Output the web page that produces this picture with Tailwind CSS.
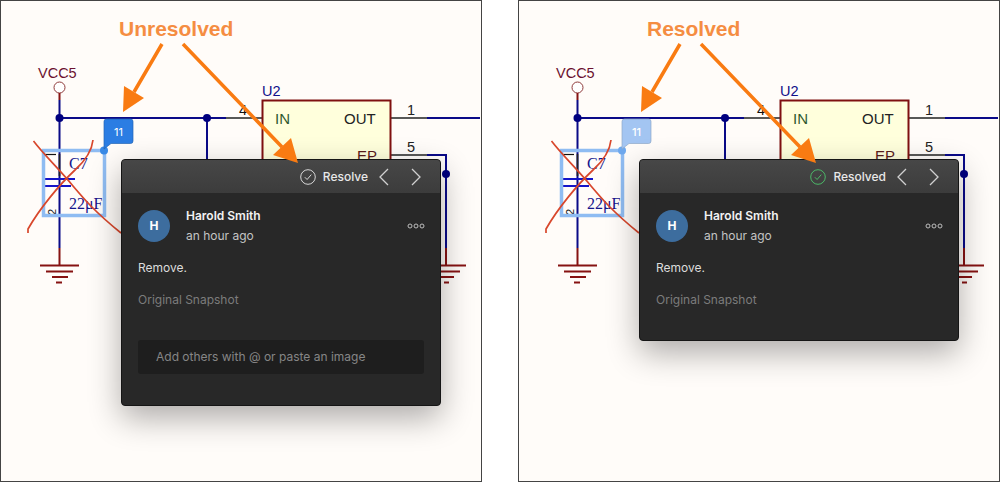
<!DOCTYPE html>
<html lang="en">
  <head>
    <meta charset="UTF-8" />
    <title>Resolved and unresolved comments</title>
    <script src="https://cdn.jsdelivr.net/npm/@tailwindcss/browser@4"></script>
  </head>
  <body class="bg-white font-['Inter',sans-serif]">
    <div class="flex justify-between w-[1000px] h-[482px] overflow-hidden">
      <!-- unresolved -->
      <div class="relative w-[482px] h-[482px] bg-[#fffcf9] ring-1 ring-inset ring-[#444]">
        <svg class="absolute inset-0" width="482" height="482" viewBox="0 0 482 482" fill="none">
          <g font-family="Liberation Sans, sans-serif" font-size="14.500">
            <text x="38" y="78" fill="#6b1030">VCC5</text>
            <text x="262" y="96" fill="#10108a">U2</text>
            <text x="239" y="115" fill="#111">4</text>
            <text x="407" y="115" fill="#222">1</text>
            <text x="407" y="152" fill="#222">5</text>
          </g>
          <circle cx="59.5" cy="87.5" r="5.5" fill="#fff" stroke="#8f3a3a" stroke-width="1" />
          <path d="M59.5 93V100M59.5 248V265M40 265.5H79M46 271.5H73M52 277H68M56 282.5H62" stroke="#861212" stroke-width="2" />
          <path d="M59.5 100V248M59.5 118H226M207 118V165M427 118H480M427 155H446V248" stroke="#0a0a88" stroke-width="2" />
          <path d="M226 118H262M391 118H427M391 155H427M59.5 154V176" stroke="#222" stroke-width="1.6" />
          <path d="M446 248V265M427 265.5H466M433 271.5H460M439 277H454M444 282.5H449" stroke="#861212" stroke-width="2" />
          <circle cx="59.5" cy="118" r="4" fill="#00007f" />
          <circle cx="207" cy="118" r="4" fill="#00007f" />
          <circle cx="446" cy="174" r="4" fill="#00007f" />
          <rect x="262.5" y="100.5" width="128" height="100" fill="#ffffdc" stroke="#7f1010" stroke-width="2" />
          <g font-family="Liberation Sans, sans-serif" font-size="15">
            <text x="275" y="124" fill="#2f5a2f">IN</text>
            <text x="344" y="124" fill="#222">OUT</text>
            <text x="357" y="161" fill="#5a1a1a">EP</text>
          </g>
          <path d="M44 179H75M44 186H71" stroke="#1414c8" stroke-width="1.8" />
          <path d="M45 154.500H56" stroke="#111" stroke-width="1.2" />
          <g font-family="Liberation Serif, serif" font-size="16" fill="#16168c">
            <text x="69" y="169">C7</text>
            <text x="69" y="209">22μF</text>
          </g>
          <text x="0" y="0" transform="translate(56 215) rotate(-90)" font-family="Liberation Sans, sans-serif" font-size="11" fill="#111">2</text>
          <rect x="43.500" y="150.500" width="61" height="65" stroke="#8fbcf2" stroke-width="3.500" />
          <path d="M33.500 141C45 156 60 170 73 186C84 199 95 212 121 233" stroke="#d8472c" stroke-width="1.7" />
          <path d="M93 140C92 150 86 160 75 170C60 184 40 208 28 229V233" stroke="#d8472c" stroke-width="1.7" />
          <circle cx="104" cy="150.500" r="4" fill="#3a8ae6" />
          <path d="M104 149V121.500Q104 119 106.500 119H130.500Q133 119 133 121.500V141Q133 143.500 130.500 143.500H111Z" fill="#2b7de3" stroke="#2465b5" stroke-width="0.7" />
          <text x="118.500" y="136" text-anchor="middle" font-family="Inter, sans-serif" font-size="11" fill="#fff">11</text>
        </svg>
        <div class="absolute left-[121px] top-[159px] w-[320px] h-[247px] flex flex-col rounded-[4px] border border-[#151515] bg-[#282828] shadow-[0_12px_32px_rgba(0,0,0,0.32)] overflow-hidden">
          <div class="h-[33px] flex items-center justify-end pr-[19px] bg-gradient-to-b from-[#474747] to-[#3c3c3c]">
            <svg width="16" height="16" viewBox="0 0 16 16" fill="none" class="mr-[7px]">
              <circle cx="8" cy="8" r="7.300" stroke="#d8d8d8" stroke-width="1" />
              <path d="M4.800 8.200L7.100 10.500L11.300 5.600" stroke="#d8d8d8" stroke-width="1" />
            </svg>
            <span class="text-[12px] font-medium text-[#e8e8e8] mr-[11px]">Resolve</span>
            <svg width="10" height="18" viewBox="0 0 10 18" fill="none" class="mr-[22px]"><path d="M9 1L1 9L9 17" stroke="#d0d0d0" stroke-width="1.300" /></svg>
            <svg width="10" height="18" viewBox="0 0 10 18" fill="none"><path d="M1 1L9 9L1 17" stroke="#d0d0d0" stroke-width="1.300" /></svg>
          </div>
          <div class="flex pl-[16px] pr-[15px] pt-[17px]">
            <div class="w-[32px] h-[32px] rounded-full bg-[#3d6d9e] flex items-center justify-center text-[12px] font-bold text-white">H</div>
            <div class="ml-[16px] flex-1 -mt-[2px]">
              <div class="text-[12px] leading-[16px] font-semibold text-[#f2f2f2]">Harold Smith</div>
              <div class="text-[12px] leading-[16px] mt-[4px] text-[#c4c4c4]">an hour ago</div>
            </div>
            <svg width="18" height="6" viewBox="0 0 18 6" fill="none" class="mt-[13px]">
              <circle cx="3" cy="3" r="2" stroke="#bdbdbd" /><circle cx="9" cy="3" r="2" stroke="#bdbdbd" /><circle cx="15" cy="3" r="2" stroke="#bdbdbd" />
            </svg>
          </div>
          <div class="pl-[16px] mt-[16px] text-[12px] leading-[16px] text-[#dcdcdc]">Remove.</div>
          <div class="pl-[16px] mt-[16px] text-[12px] leading-[16px] text-[#7c7c7c]">Original Snapshot</div>
          <div class="mx-[16px] mt-[32px] h-[34px] rounded-[3px] bg-[#1e1e1e] flex items-center pl-[18px] text-[12px] text-[#868686]">Add others with @ or paste an image</div>
        </div>
        <svg class="absolute inset-0" width="482" height="482" viewBox="0 0 482 482" fill="none">
          <text x="119" y="36" font-family="Liberation Sans, sans-serif" font-size="21" font-weight="700" fill="#f58d42">Unresolved</text>
          <path d="M162 44L134 92M183 44L282 147" stroke="#f97b12" stroke-width="3.500" />
          <path d="M123 112L124 86L144 98Z M298 163L273 155L291 138Z" fill="#f97b12" />
        </svg>
      </div>

      <!-- resolved -->
      <div class="relative w-[482px] h-[482px] bg-[#fffcf9] ring-1 ring-inset ring-[#444]">
        <svg class="absolute inset-0" width="482" height="482" viewBox="0 0 482 482" fill="none">
          <g font-family="Liberation Sans, sans-serif" font-size="14.500">
            <text x="38" y="78" fill="#6b1030">VCC5</text>
            <text x="262" y="96" fill="#10108a">U2</text>
            <text x="239" y="115" fill="#111">4</text>
            <text x="407" y="115" fill="#222">1</text>
            <text x="407" y="152" fill="#222">5</text>
          </g>
          <circle cx="59.5" cy="87.5" r="5.5" fill="#fff" stroke="#8f3a3a" stroke-width="1" />
          <path d="M59.5 93V100M59.5 248V265M40 265.5H79M46 271.5H73M52 277H68M56 282.5H62" stroke="#861212" stroke-width="2" />
          <path d="M59.5 100V248M59.5 118H226M207 118V165M427 118H480M427 155H446V248" stroke="#0a0a88" stroke-width="2" />
          <path d="M226 118H262M391 118H427M391 155H427M59.5 154V176" stroke="#222" stroke-width="1.6" />
          <path d="M446 248V265M427 265.5H466M433 271.5H460M439 277H454M444 282.5H449" stroke="#861212" stroke-width="2" />
          <circle cx="59.5" cy="118" r="4" fill="#00007f" />
          <circle cx="207" cy="118" r="4" fill="#00007f" />
          <circle cx="446" cy="174" r="4" fill="#00007f" />
          <rect x="262.5" y="100.5" width="128" height="100" fill="#ffffdc" stroke="#7f1010" stroke-width="2" />
          <g font-family="Liberation Sans, sans-serif" font-size="15">
            <text x="275" y="124" fill="#2f5a2f">IN</text>
            <text x="344" y="124" fill="#222">OUT</text>
            <text x="357" y="161" fill="#5a1a1a">EP</text>
          </g>
          <path d="M44 179H75M44 186H71" stroke="#1414c8" stroke-width="1.8" />
          <path d="M45 154.500H56" stroke="#111" stroke-width="1.2" />
          <g font-family="Liberation Serif, serif" font-size="16" fill="#16168c">
            <text x="69" y="169">C7</text>
            <text x="69" y="209">22μF</text>
          </g>
          <text x="0" y="0" transform="translate(56 215) rotate(-90)" font-family="Liberation Sans, sans-serif" font-size="11" fill="#111">2</text>
          <rect x="43.500" y="150.500" width="61" height="65" stroke="#8fbcf2" stroke-width="3.500" />
          <path d="M33.500 141C45 156 60 170 73 186C84 199 95 212 121 233" stroke="#d8472c" stroke-width="1.7" />
          <path d="M93 140C92 150 86 160 75 170C60 184 40 208 28 229V233" stroke="#d8472c" stroke-width="1.7" />
          <circle cx="104" cy="150.500" r="4" fill="#6fa9ee" />
          <path d="M104 149V121.500Q104 119 106.500 119H130.500Q133 119 133 121.500V141Q133 143.500 130.500 143.500H111Z" fill="#a3c5f2" stroke="#8fa9c9" stroke-width="0.7" />
          <text x="118.500" y="136" text-anchor="middle" font-family="Inter, sans-serif" font-size="11" font-weight="500" fill="#fff">11</text>
        </svg>
        <div class="absolute left-[121px] top-[159px] w-[320px] h-[182px] flex flex-col rounded-[4px] border border-[#151515] bg-[#282828] shadow-[0_12px_32px_rgba(0,0,0,0.32)] overflow-hidden">
          <div class="h-[33px] flex items-center justify-end pr-[19px] bg-gradient-to-b from-[#474747] to-[#3c3c3c]">
            <svg width="16" height="16" viewBox="0 0 16 16" fill="none" class="mr-[7px]">
              <circle cx="8" cy="8" r="7.300" stroke="#4cb868" stroke-width="1" />
              <path d="M4.800 8.200L7.100 10.500L11.300 5.600" stroke="#4cb868" stroke-width="1" />
            </svg>
            <span class="text-[12px] font-medium text-[#e8e8e8] mr-[11px]">Resolved</span>
            <svg width="10" height="18" viewBox="0 0 10 18" fill="none" class="mr-[22px]"><path d="M9 1L1 9L9 17" stroke="#d0d0d0" stroke-width="1.300" /></svg>
            <svg width="10" height="18" viewBox="0 0 10 18" fill="none"><path d="M1 1L9 9L1 17" stroke="#d0d0d0" stroke-width="1.300" /></svg>
          </div>
          <div class="flex pl-[16px] pr-[15px] pt-[17px]">
            <div class="w-[32px] h-[32px] rounded-full bg-[#3d6d9e] flex items-center justify-center text-[12px] font-bold text-white">H</div>
            <div class="ml-[16px] flex-1 -mt-[2px]">
              <div class="text-[12px] leading-[16px] font-semibold text-[#f2f2f2]">Harold Smith</div>
              <div class="text-[12px] leading-[16px] mt-[4px] text-[#c4c4c4]">an hour ago</div>
            </div>
            <svg width="18" height="6" viewBox="0 0 18 6" fill="none" class="mt-[13px]">
              <circle cx="3" cy="3" r="2" stroke="#bdbdbd" /><circle cx="9" cy="3" r="2" stroke="#bdbdbd" /><circle cx="15" cy="3" r="2" stroke="#bdbdbd" />
            </svg>
          </div>
          <div class="pl-[16px] mt-[16px] text-[12px] leading-[16px] text-[#dcdcdc]">Remove.</div>
          <div class="pl-[16px] mt-[16px] text-[12px] leading-[16px] text-[#7c7c7c]">Original Snapshot</div>
        </div>
        <svg class="absolute inset-0" width="482" height="482" viewBox="0 0 482 482" fill="none">
          <text x="129" y="36" font-family="Liberation Sans, sans-serif" font-size="21" font-weight="700" fill="#f58d42">Resolved</text>
          <path d="M162 44L134 92M183 44L282 147" stroke="#f97b12" stroke-width="3.500" />
          <path d="M123 112L124 86L144 98Z M298 163L273 155L291 138Z" fill="#f97b12" />
        </svg>
      </div>
    </div>
  </body>
</html>
